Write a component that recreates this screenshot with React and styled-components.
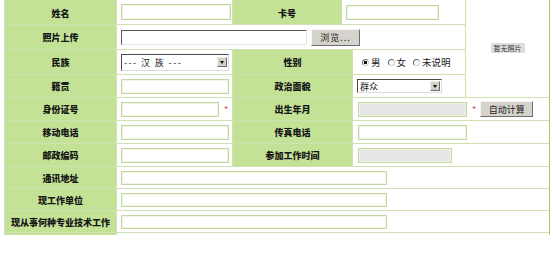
import React from "react";
import styled, { createGlobalStyle } from "styled-components";

const GlobalStyle = createGlobalStyle`
  body {
    margin: 0;
    background: #fff;
    font-family: "Noto Sans CJK SC", "Liberation Sans", sans-serif;
  }
`;

function App() {
  return (
    <>
      <GlobalStyle />
      <Sheet>
        <Label $top={3}>姓名</Label>
        <Field>
          <TextBox $w={110} $h={16} />
        </Field>
        <Label $top={3}>卡号</Label>
        <Field $span={2}>
          <TextBox $w={93} $h={15} />
        </Field>
        <PhotoCell>
          <NoPhoto>暂无照片</NoPhoto>
        </PhotoCell>

        <Label>照片上传</Label>
        <Field $span={4}>
          <FileBox />
          <Button $w={49} $h={17} $spaced>浏览...</Button>
        </Field>

        <Label>民族</Label>
        <Field>
          <FakeSelect $w={108} $h={17} $spaced>
            <span>--- 汉 族 ---</span>
            <Arrow />
          </FakeSelect>
        </Field>
        <Label $span={2}>性别</Label>
        <Field $pad={9}>
          <Radio checked label="男" />
          <Radio label="女" />
          <Radio label="未说明" />
        </Field>

        <Label>籍贯</Label>
        <Field>
          <TextBox $w={108} />
        </Field>
        <Label $span={2}>政治面貌</Label>
        <Field>
          <FakeSelect $w={85} $h={14}>
            <span>群众</span>
            <Arrow />
          </FakeSelect>
        </Field>

        <Label>身份证号</Label>
        <Field>
          <TextBox $w={98} />
          <Star>*</Star>
        </Field>
        <Label $span={2}>出生年月</Label>
        <Field $span={2} $pad={5}>
          <TextBox $w={109} $grey />
          <Star>*</Star>
          <Button $w={53} $h={16}>自动计算</Button>
        </Field>

        <Label>移动电话</Label>
        <Field>
          <TextBox $w={108} />
        </Field>
        <Label $span={2}>传真电话</Label>
        <Field $span={2} $pad={5}>
          <TextBox $w={109} />
        </Field>

        <Label>邮政编码</Label>
        <Field>
          <TextBox $w={108} />
        </Field>
        <Label $span={2}>参加工作时间</Label>
        <Field $span={2} $pad={5}>
          <TextBox $w={94} $grey />
        </Field>

        <Label>通讯地址</Label>
        <Field $span={5}>
          <TextBox $w={266} $h={14} />
        </Field>

        <Label>现工作单位</Label>
        <Field $span={5}>
          <TextBox $w={266} $h={14} />
        </Field>

        <Label>现从事何种专业技术工作</Label>
        <Field $span={5}>
          <TextBox $w={266} $h={14} />
        </Field>

        <Label />
        <Field $span={5} />
      </Sheet>
    </>
  );
}

function Radio({ checked, label }) {
  return (
    <RadioItem>
      <RadioDot $on={checked} />
      {label}
    </RadioItem>
  );
}

export default App;

const Sheet = styled.div`
  display: grid;
  grid-template-columns: 111px 115px 108px 10px 112px 83px;
  grid-template-rows: 24px 24px 24px 22px 22px 22px 22px 21px 21px 21px 2px;
  gap: 1px;
  width: 544px;
  margin-left: 4px;
  background: #cfe0b3;
  border-left: 1px solid #d6d6d6;
  border-right: 1px solid #9fcb66;
`;

const Label = styled.div`
  grid-column: span ${(p) => p.$span || 1};
  display: flex;
  align-items: center;
  justify-content: center;
  padding-top: ${(p) => p.$top || 1}px;
  box-sizing: border-box;
  background: #c4e296;
  color: #161616;
  font-size: 9px;
  font-weight: 900;
  white-space: nowrap;
  overflow: hidden;
`;

const Field = styled.div`
  grid-column: span ${(p) => p.$span || 1};
  display: flex;
  align-items: center;
  gap: 4px;
  padding-left: ${(p) => p.$pad || 4}px;
  background: #fff;
  font-size: 9px;
  color: #222;
  white-space: nowrap;
  overflow: hidden;
`;

const PhotoCell = styled.div`
  grid-row: 1 / span 4;
  grid-column: 6;
  display: flex;
  align-items: center;
  justify-content: center;
  background: #fff;
`;

const NoPhoto = styled.div`
  margin-top: -2px;
  padding: 1px 3px;
  background: #dedede;
  color: #333;
  font-size: 7px;
  line-height: 8px;
`;

const TextBox = styled.input.attrs({ type: "text" })`
  width: ${(p) => p.$w}px;
  height: ${(p) => p.$h || 15}px;
  box-sizing: border-box;
  margin: 0;
  padding: 0 2px;
  border: 1px solid #c3d8a0;
  box-shadow: inset 0 0 0 1px #eef5e3;
  background: ${(p) => (p.$grey ? "#e6e6e6" : "#fff")};
  outline: none;
`;

const FileBox = styled.div`
  width: 186px;
  height: 15px;
  box-sizing: border-box;
  border-top: 1px solid #5a5a5a;
  border-left: 1px solid #5a5a5a;
  border-right: 1px solid #e4e4e4;
  border-bottom: 1px solid #e4e4e4;
  background: #fff;
`;

const Button = styled.button`
  width: ${(p) => p.$w}px;
  height: ${(p) => p.$h}px;
  box-sizing: border-box;
  margin: 0;
  padding: 0;
  background: #d6d3cc;
  border: 1px solid;
  border-color: #f4f4f4 #6e6e6e #6e6e6e #f4f4f4;
  font-family: "Noto Sans CJK SC", sans-serif;
  font-size: 9px;
  letter-spacing: ${(p) => (p.$spaced ? "1px" : "0")};
  color: #222;
`;

const FakeSelect = styled.div`
  width: ${(p) => p.$w}px;
  height: ${(p) => p.$h}px;
  box-sizing: border-box;
  display: flex;
  align-items: center;
  justify-content: space-between;
  padding-left: 2px;
  padding-right: 1px;
  border: 1px solid;
  border-color: #4a4a4a #dcdcdc #dcdcdc #4a4a4a;
  background: #fff;
  font-size: 9px;
  letter-spacing: ${(p) => (p.$spaced ? "1.4px" : "0")};
  white-space: pre;
  color: #222;
`;

const Arrow = styled.span`
  width: 10px;
  height: 10px;
  box-sizing: border-box;
  position: relative;
  background: #d4d0c8;
  border: 1px solid;
  border-color: #f0f0f0 #6e6e6e #6e6e6e #f0f0f0;
  &::after {
    content: "";
    position: absolute;
    left: 1.5px;
    top: 2.5px;
    border-left: 2.5px solid transparent;
    border-right: 2.5px solid transparent;
    border-top: 3px solid #111;
  }
`;

const RadioItem = styled.label`
  display: flex;
  align-items: center;
  gap: 2px;
  margin-right: 3px;
  font-size: 9.5px;
  color: #222;
  white-space: nowrap;
`;

const RadioDot = styled.span`
  width: 7px;
  height: 7px;
  box-sizing: border-box;
  border-radius: 50%;
  border: 1px solid #666;
  border-right-color: #ccc;
  border-bottom-color: #ccc;
  background: ${(p) =>
    p.$on ? "radial-gradient(circle, #111 0 1.5px, #fff 2px)" : "#fff"};
`;

const Star = styled.span`
  color: #e0303a;
  font-size: 9px;
  margin-left: 1px;
`;
